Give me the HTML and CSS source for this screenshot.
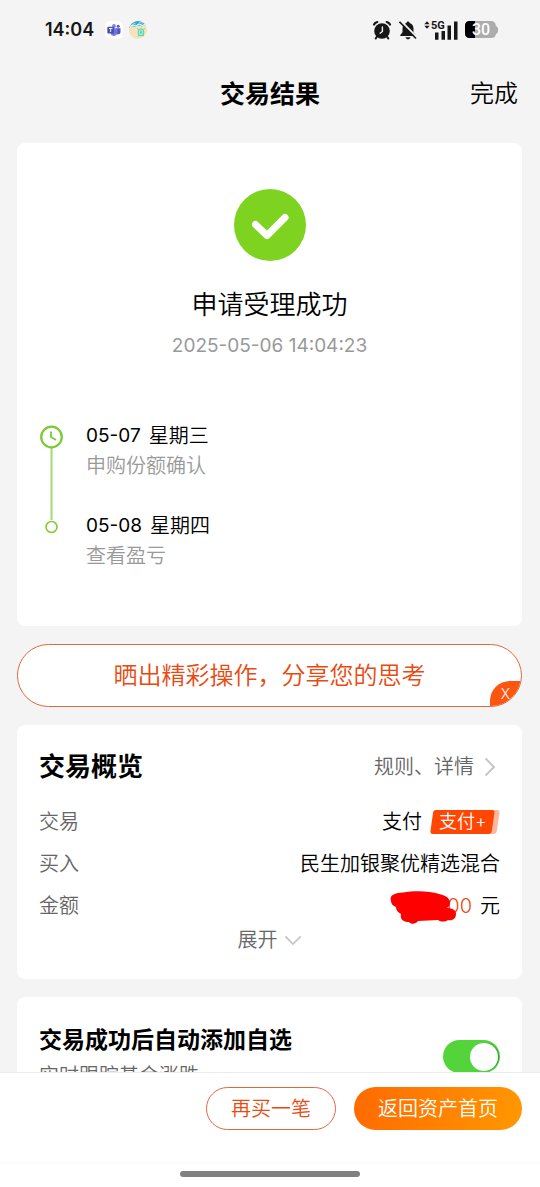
FILE: index.html
```html
<!DOCTYPE html>
<html lang="zh-CN">
<head>
<meta charset="utf-8">
<meta name="viewport" content="width=device-width, initial-scale=1">
<title>交易结果</title>
<link rel="stylesheet" href="styles.css">
</head>
<body>
<div class="screen">
  <div class="status">
    <div class="status-left">
      <span class="clock">14:04</span>
      <svg class="app-icon" viewBox="0 0 18 18" aria-hidden="true">
        <rect width="18" height="18" rx="5" fill="#fff"/>
        <circle cx="9" cy="5" r="1.900" fill="#7b83eb"/>
        <circle cx="13.200" cy="5.300" r="1.500" fill="#5059c9"/>
        <path d="M11 7.300h4.500v4a2.400 2.400 0 0 1-4.500.8z" fill="#5059c9"/>
        <path d="M5.500 7.300h6.700v4.500a3.400 3.400 0 0 1-6.700.5z" fill="#7178de"/>
        <rect x="2.300" y="5.700" width="6.800" height="6.800" rx=".7" fill="#4a50b4"/>
        <path d="M4 7.500h3.400M5.700 7.500v3.500" stroke="#fff" stroke-width=".9"/>
      </svg>
      <svg class="app-icon" viewBox="0 0 18 18" aria-hidden="true">
        <defs><clipPath id="disc"><circle cx="9" cy="9" r="9"/></clipPath></defs>
        <g clip-path="url(#disc)">
          <rect width="18" height="18" fill="#f6e2bd"/>
          <path d="M0 0h18v5l-3-1-2 1.500-3-1-4 1.500-3-1L0 7z" fill="#2ea7d2"/>
          <path d="M1 5.500l3-1.500 3 1 3-2 3 1.500 4-1.500" stroke="#e9fbff" stroke-width="1.300" fill="none"/>
          <path d="M4 2l3 1M10 1.500l4 .5" stroke="#a4dced" stroke-width=".8"/>
          <ellipse cx="12" cy="11.300" rx="2.800" ry="3.600" fill="#a5f0cf" stroke="#4fd3b5" stroke-width="1"/>
          <path d="M9.500 8.500l-1.500-1M14.500 8.500l1.400-1.200M10 14l-1.300 1.500M14 14l1.200 1.400M12 9.500v3.500M10.800 11.200h2.400" stroke="#35c5a5" stroke-width=".7"/>
        </g>
      </svg>
    </div>
    <div class="status-right">
      <svg width="20" height="20" viewBox="0 0 20 20" aria-hidden="true">
        <circle cx="10" cy="11" r="7.800" fill="#171717"/>
        <path d="M2 4.600A5 5 0 0 1 5.300 2M14.700 2A5 5 0 0 1 18 4.600" stroke="#171717" stroke-width="2.200" fill="none" stroke-linecap="round"/>
        <path d="M5 16.500l-1.300 2M15 16.500l1.300 2" stroke="#171717" stroke-width="2" stroke-linecap="round"/>
        <path d="M10.400 7v4.500l-2.300 1.700" stroke="#f4f4f4" stroke-width="1.400" fill="none" stroke-linecap="round"/>
      </svg>
      <svg class="muted-icon" width="18" height="20" viewBox="0 0 18 20" aria-hidden="true">
        <path d="M9 1.500c1 0 1.500.6 1.500 1.400 2.700.7 4 2.800 4 5.600v3.800l2.200 2.700v1H1.300v-1l2.200-2.700V8.500c0-2.800 1.300-4.900 4-5.600C7.500 2.100 8 1.500 9 1.500z" fill="#171717"/>
        <path d="M6.500 17.200h5c-.5 1.400-1.400 2-2.500 2s-2-.6-2.500-2z" fill="#171717"/>
        <path d="M1.600.8l17 17" stroke="#f4f4f4" stroke-width="2"/>
        <path d="M.5 1.800L17 18.500" stroke="#171717" stroke-width="1.600"/>
      </svg>
      <svg class="signal" width="34" height="20" viewBox="0 0 34 20" aria-hidden="true">
        <path d="M.3 4.200L3 1.200l2.700 3zM.3 5.700L3 8.700l2.700-3z" fill="#171717"/>
        <text x="7" y="9" class="net">5G</text>
        <path d="M11 12.500h3.500v7.200H11zM17.500 11H21v8.700h-3.500zM23.500 5.500H27v14.200h-3.500zM30 1.500h3.500v18.200H30z" fill="#171717"/>
      </svg>
      <svg width="34" height="18" viewBox="0 0 34 18" aria-hidden="true">
        <path d="M5 0h21c3 0 4.500 1.500 4.800 4.500L33 7v4l-2.200 2.500C30.500 16 29 17 26 17H5c-3.500 0-5-1.500-5-5V5c0-3.500 1.500-5 5-5z" fill="#acacac"/>
        <path d="M10 0H5C1.500 0 0 1.500 0 5v7c0 3.500 1.500 5 5 5h5z" fill="#000"/>
        <text x="16" y="14" class="charge">30</text>
      </svg>
    </div>
  </div>

  <header class="header">
    <h1 class="page-title">交易结果</h1>
    <button class="done" type="button">完成</button>
  </header>

  <main class="content">
    <section class="card result">
      <svg class="result-icon" viewBox="0 0 72 72" aria-hidden="true">
        <circle cx="36" cy="36" r="36" fill="#7ed321"/>
        <path d="M21.500 35.500L33 46.500 51 28.500" fill="none" stroke="#fff" stroke-width="7" stroke-linecap="round" stroke-linejoin="round"/>
      </svg>
      <h2 class="result-title">申请受理成功</h2>
      <time class="result-time">2025-05-06 14:04:23</time>
      <div class="timeline">
        <svg class="track" width="24" height="112" viewBox="0 0 24 112" aria-hidden="true">
          <path d="M12.500 23v72" stroke="#a3d977" stroke-width="2"/>
          <circle cx="12.500" cy="12" r="10.300" fill="#fff" stroke="#7bcb34" stroke-width="2.300"/>
          <path d="M12 6.500V12l5 3" fill="none" stroke="#7bcb34" stroke-width="1.800"/>
          <circle cx="12.500" cy="102" r="5.500" fill="#fff" stroke="#7bcb34" stroke-width="1.500"/>
        </svg>
        <ol class="steps">
          <li class="step"><span class="step-date"><span class="digits">05-07</span><span>星期三</span></span><span class="step-note">申购份额确认</span></li>
          <li class="step"><span class="step-date"><span class="digits">05-08</span><span>星期四</span></span><span class="step-note">查看盈亏</span></li>
        </ol>
      </div>
    </section>

    <div class="share">
      <a class="share-link" href="#share">晒出精彩操作，分享您的思考</a>
      <button class="share-close" type="button">X</button>
    </div>

    <section class="card overview">
      <div class="overview-head">
        <h2 class="overview-title">交易概览</h2>
        <a class="rules" href="#rules">规则、详情
          <svg width="12" height="20" viewBox="0 0 12 20" aria-hidden="true"><path d="M1.500 1.500L10 10l-8.500 8.500" fill="none" stroke="#c6c6c6" stroke-width="2"/></svg>
        </a>
      </div>
      <dl class="rows">
        <div class="row"><dt>交易</dt>
          <dd>支付
            <span class="pay-tag">
              <svg class="pay-shape" viewBox="0 0 70 24" aria-hidden="true">
                <path d="M62 0h5q3 0 2.500 3l-2.700 18q-.4 3-3.300 3H56z" fill="#ffb8a0"/>
                <path d="M6 0h56q3 0 2.500 3l-2.700 18q-.4 3-3.300 3H3Q0 24 .5 21L3 3q.4-3 3-3z" fill="#ff4603"/>
              </svg>
              <span class="pay-text">支付+</span>
            </span>
          </dd>
        </div>
        <div class="row"><dt>买入</dt><dd>民生加银聚优精选混合</dd></div>
        <div class="row"><dt>金额</dt>
          <dd><span class="amount">00
            <svg class="scribble" width="68" height="34" viewBox="0 0 68 34" aria-hidden="true"><path d="M1 10C-1 4 5 2 13 1.500 25-.5 40 0 49 3c5 1 10 3 11 8 0 3-1 5-3 6 5 0 9 2 9 6 0 5-4 7-8 6-3 2-7 2-10 0l-20 1c-2 3-7 4-9 1-7 0-9-4-8-8-4-2-5-5-5-7C3 15 1 13 1 10z" fill="#fe0000"/></svg>
          </span>元</dd>
        </div>
      </dl>
      <button class="expand" type="button">展开
        <svg width="18" height="11" viewBox="0 0 20 12" aria-hidden="true"><path d="M1.500 1.500L10 10l8.500-8.500" fill="none" stroke="#c6c6c6" stroke-width="2"/></svg>
      </button>
    </section>

    <section class="card follow">
      <label class="follow-label" for="auto-follow">
        <span class="follow-title">交易成功后自动添加自选</span>
        <span class="follow-note">实时跟踪基金涨跌</span>
      </label>
      <input class="switch" id="auto-follow" type="checkbox" role="switch" checked>
    </section>
  </main>

  <footer class="actions">
    <div class="buttons">
      <button class="btn btn-outline" type="button">再买一笔</button>
      <button class="btn btn-solid" type="button">返回资产首页</button>
    </div>
    <div class="home"><span class="home-bar"></span></div>
  </footer>
</div>
</body>
</html>
```
FILE: styles.css
```css
* { box-sizing: border-box; }

body {
  margin: 0;
  background: #f4f4f4;
  color: #000;
  font-family: Inter, "Noto Sans CJK SC", sans-serif;
  font-size: 20px;
  font-weight: 350;
  line-height: 30px;
}

h1, h2, dl, dd, ol { margin: 0; padding: 0; }
svg { display: block; flex: none; }
a { color: inherit; text-decoration: none; }
button {
  margin: 0;
  padding: 0;
  border: 0;
  background: none;
  color: inherit;
  font: inherit;
  cursor: pointer;
}

.screen {
  display: flex;
  flex-direction: column;
  height: 100vh;
}

.status {
  display: flex;
  flex: none;
  justify-content: space-between;
  align-items: center;
  height: 60px;
  padding: 0 41px 0 45px;
}
.status-left, .status-right { display: flex; align-items: center; }
.status-left { gap: 6px; }
.status-right { gap: 7px; }
.clock { margin-right: 5px; font-size: 18px; font-weight: 600; color: #171717; }
.app-icon { width: 18px; height: 18px; }
.net { font: 700 11px Roboto, sans-serif; fill: #171717; }
.charge { font: 500 16px Roboto, sans-serif; fill: #fff; text-anchor: middle; }

.header {
  display: grid;
  flex: none;
  grid-template-columns: 1fr auto 1fr;
  align-items: center;
  height: 68px;
  padding: 0 22px;
}
.page-title { grid-column: 2; font-size: 25px; font-weight: 700; }
.done { justify-self: end; font-size: 24px; }

.content {
  display: flex;
  flex: 1;
  flex-direction: column;
  gap: 18px;
  min-height: 0;
  padding: 15px 18px 0 17px;
  overflow: hidden;
}
.card { flex: none; border-radius: 8px; background: #fff; }

.result {
  display: flex;
  flex-direction: column;
  align-items: center;
  padding: 46px 22px 55px;
}
.result-icon { width: 72px; height: 72px; }
.result-title { margin-top: 29px; font-size: 26px; font-weight: 350; }
.result-time { margin-top: 11px; font-size: 19px; font-weight: 400; color: #999; }

.timeline {
  display: flex;
  align-self: stretch;
  gap: 23px;
  margin-top: 60px;
}
.track { margin-top: 4px; }
.steps { display: grid; gap: 30px; list-style: none; }
.step { display: grid; }
.step-date { display: flex; gap: 8px; }
.digits { font-size: 19px; font-weight: 400; }
.step-note { color: #999; }

.share {
  position: relative;
  flex: none;
  overflow: hidden;
  border: 1px solid #e0683f;
  border-radius: 32px;
  background: #fff;
}
.share-link {
  display: block;
  padding: 16px 0 15px;
  font-size: 24px;
  text-align: center;
  color: #e84a10;
}
.share-close {
  position: absolute;
  right: 0;
  bottom: 0;
  width: 31px;
  height: 25px;
  border-radius: 20px 0 0 0;
  background: #fb560f;
  color: #fff;
  font-size: 14px;
  line-height: 24px;
}

.overview {
  display: flex;
  flex-direction: column;
  padding: 27px 22px 24px;
}
.overview-head { display: flex; justify-content: space-between; align-items: center; }
.overview-title { font-size: 26px; font-weight: 700; }
.rules { display: flex; align-items: center; gap: 10px; padding-right: 4px; color: #666; }
.rows { display: grid; gap: 12px; margin-top: 25px; }
.row { display: flex; justify-content: space-between; }
.row dt { color: #666; }
.row dd { display: flex; align-items: center; gap: 8px; }
.pay-tag { display: grid; align-items: center; }
.pay-shape, .pay-text { grid-area: 1 / 1; }
.pay-shape { width: 70px; height: 24px; }
.pay-text { padding-left: 9px; font-size: 18px; line-height: 24px; color: #fff; }
.amount { position: relative; color: #e84a10; }
.scribble { position: absolute; top: 0; right: 14px; }
.expand {
  display: flex;
  align-self: center;
  align-items: center;
  gap: 6px;
  margin-top: 4px;
  color: #666;
}

.follow {
  display: flex;
  justify-content: space-between;
  align-items: flex-start;
  padding: 28px 22px;
}
.follow-label { display: grid; gap: 6px; }
.follow-title { font-size: 23px; font-weight: 700; }
.follow-note { color: #666; }
.switch {
  display: flex;
  flex: none;
  align-items: center;
  width: 57px;
  height: 33px;
  margin: 15px 0 0;
  padding: 2px;
  border-radius: 17px;
  background: #ccc;
  appearance: none;
}
.switch::before {
  width: 28px;
  height: 28px;
  border-radius: 50%;
  background: #fff;
  box-shadow: 1px 0 1px #2a9a2a;
  content: "";
}
.switch:checked { justify-content: flex-end; background: #53d43b; }

.actions { flex: none; border-top: 1px solid #ebebeb; background: #fff; }
.buttons {
  display: flex;
  justify-content: flex-end;
  gap: 18px;
  padding: 14px 18px 32px;
}
.btn { height: 43px; padding: 0 24px; border-radius: 22px; }
.btn-outline { border: 1px solid #e0683f; color: #e84a10; }
.btn-solid { background: linear-gradient(100deg, #ff6a00, #ff9800); color: #fff; }
.home { display: flex; justify-content: center; padding: 8px 0 10px; border-top: 1px solid #fafafa; }
.home-bar { width: 180px; height: 6px; border-radius: 3px; background: #808080; }
```
